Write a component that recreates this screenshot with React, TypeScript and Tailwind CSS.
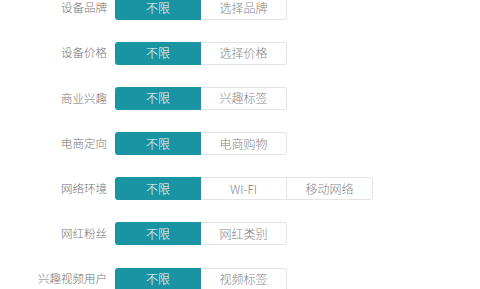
import * as React from "react";

const rows: { label: string; options: string[] }[] = [
  { label: "设备品牌", options: ["不限", "选择品牌"] },
  { label: "设备价格", options: ["不限", "选择价格"] },
  { label: "商业兴趣", options: ["不限", "兴趣标签"] },
  { label: "电商定向", options: ["不限", "电商购物"] },
  { label: "网络环境", options: ["不限", "WI-FI", "移动网络"] },
  { label: "网红粉丝", options: ["不限", "网红类别"] },
  { label: "兴趣视频用户", options: ["不限", "视频标签"] },
];

function OptionGroup({ options }: { options: string[] }) {
  return (
    <div className="flex h-[23px]">
      {options.map((opt, i) => {
        const first = i === 0;
        const last = i === options.length - 1;
        return (
          <div
            key={opt}
            className={
              "flex w-[86px] items-center justify-center text-[12px] font-light " +
              (first
                ? "rounded-l-[3px] bg-[#1a93a3] text-white "
                : "border border-l-0 border-[#e4e4e4] bg-white text-[#858585] ") +
              (last ? "rounded-r-[3px]" : "")
            }
          >
            {opt}
          </div>
        );
      })}
    </div>
  );
}

export default function App() {
  return (
    <div
      className="h-[289px] w-[480px] overflow-hidden bg-white"
      style={{ fontFamily: '"Noto Sans CJK SC", "Liberation Sans", sans-serif' }}
    >
      <div className="mt-[-3.5px] flex flex-col gap-[22.2px]">
        {rows.map((row) => (
          <div key={row.label} className="flex items-center">
            <div className="w-[107px] text-right text-[11.5px] font-light leading-none text-[#737373]">
              {row.label}
            </div>
            <div className="ml-[8px]">
              <OptionGroup options={row.options} />
            </div>
          </div>
        ))}
      </div>
    </div>
  );
}
